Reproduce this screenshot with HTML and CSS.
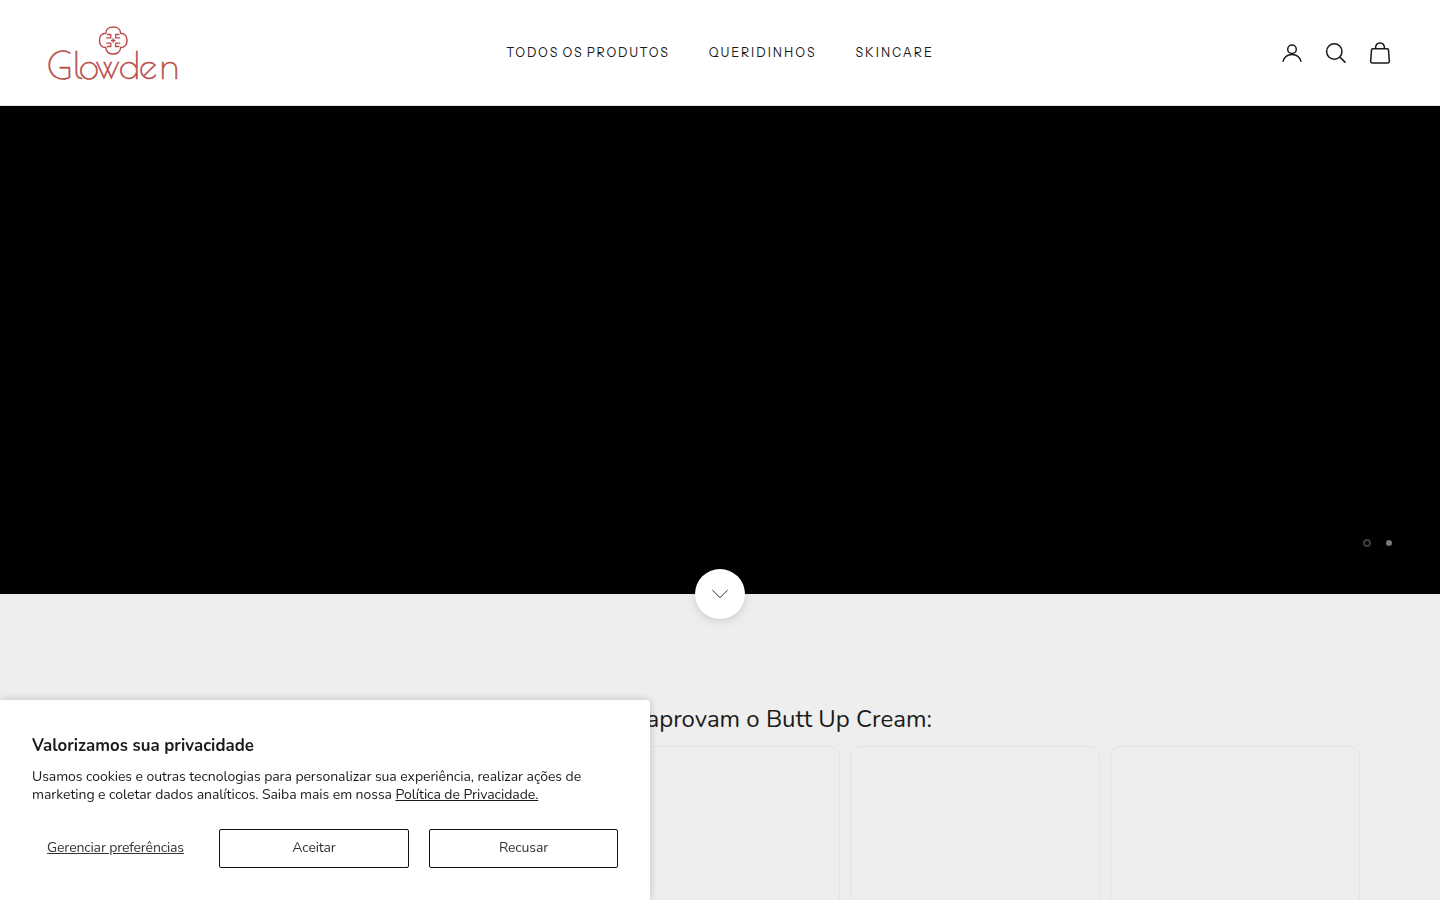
FILE: index.html
```html
<!DOCTYPE html>
<html lang="pt-BR">
<head>
<meta charset="utf-8">
<title>Glowden</title>
<link rel="stylesheet" href="styles.css">
</head>
<body>
<header class="header">
  <a class="logo" aria-label="Glowden">
    <svg width="130" height="56" viewBox="0 0 130 56">
      <g fill="none" stroke="#b84a48" stroke-linejoin="round">
        <path stroke-width="1.500" d="M57.800 8.200C57.800 4.200 61 2 65.200 2S72.600 4.200 72.600 8.200C76.600 8.200 79 11.300 79 15.400S76.600 22.600 72.600 22.600C72.600 26.600 69.400 29 65.200 29S57.800 26.600 57.800 22.600C53.800 22.600 51.500 19.500 51.500 15.400S53.800 8.200 57.800 8.200Z"/>
        <path stroke-width="1.300" d="M59 9.500h3.800v3.300h-4.600M71.400 9.500h-3.800v3.300h4.600M59 21.500h3.800v-3.300h-4.600M71.400 21.500h-3.800v-3.300h4.600M65.200 13.200v4.600M62.900 15.500h4.600"/>
      </g>
      <text class="wordmark" x="-1 25.500 31 48 71 91 112" y="54">Glowden</text>
    </svg>
  </a>
  <nav class="nav">
    <a class="nav-wide">TODOS OS PRODUTOS</a>
    <a>QUERIDINHOS</a>
    <a>SKINCARE</a>
  </nav>
  <div class="actions">
    <svg class="icon" viewBox="0 0 22 22"><circle cx="11" cy="7.300" r="4.300"/><path d="M1.800 19.800c1.300-4.500 4.700-7.300 9.200-7.300s7.900 2.800 9.200 7.300"/></svg>
    <svg class="icon" viewBox="0 0 22 22"><circle cx="9.300" cy="9.500" r="7.700"/><path d="m14.900 15.100 5.600 5.500"/></svg>
    <svg class="icon" viewBox="0 0 22 22"><path d="M3.700 6.800h14.600q1.100 0 1.200 1.100l.8 11.300q.1 1.700-1.600 1.700H3.300q-1.700 0-1.600-1.700l.8-11.300q.1-1.100 1.200-1.100zM6.500 6.800c0-3.200 1.700-5.700 4.500-5.700s4.500 2.500 4.500 5.700"/></svg>
  </div>
</header>
<section class="hero">
  <div class="dots"><span class="dot"></span><span class="dot dot-active"></span></div>
  <button class="scroll-down" aria-label="Rolar"><svg width="18" height="10" viewBox="0 0 18 10"><path d="m1.300 1 7.700 7.600L16.700 1"/></svg></button>
</section>
<section class="reviews">
  <h2 class="reviews-title"><span>aprovam o Butt Up Cream:</span></h2>
  <div class="cards"><div class="card"></div><div class="card"></div><div class="card"></div><div class="card"></div><div class="card"></div></div>
</section>
<aside class="cookie">
  <h3 class="cookie-title">Valorizamos sua privacidade</h3>
  <p class="cookie-text">Usamos cookies e outras tecnologias para personalizar sua experiência, realizar ações de<br>marketing e coletar dados analíticos. Saiba mais em nossa <a class="link">Política de Privacidade.</a></p>
  <div class="cookie-actions">
    <button class="btn-link">Gerenciar preferências</button>
    <button class="btn">Aceitar</button>
    <button class="btn">Recusar</button>
  </div>
</aside>
</body>
</html>
```
FILE: styles.css
```css
* { box-sizing: border-box; }
body {
  margin: 0;
  height: 900px;
  overflow: hidden;
  background: #eee;
  color: #1a1a1a;
  font-family: Nunito, "Open Sans", "Noto Sans", sans-serif;
}
.header {
  display: grid;
  grid-template-columns: 1fr auto 1fr;
  align-items: center;
  height: 106px;
  padding: 0 48px;
  background: #fff;
  border-bottom: 1px solid #e3e3e3;
}
.logo, .logo svg { display: block; }
.logo svg { overflow: visible; }
.wordmark { fill: #b84a48; stroke: #b84a48; stroke-width: .5; font: 400 36px "Poiret One", Lato, sans-serif; }
.nav {
  display: flex;
  gap: 39px;
  font: 400 12.5px/20px "Instrument Sans", Inter, sans-serif;
  letter-spacing: 1.98px;
  white-space: nowrap;
}
.nav-wide { letter-spacing: 1.75px; word-spacing: -.8px; }
.actions { display: flex; justify-content: flex-end; gap: 22px; padding-right: 1px; }
.icon {
  width: 22px;
  height: 22px;
  fill: none;
  stroke: #1a1a1a;
  stroke-width: 1.5;
}
.hero {
  position: relative;
  display: flex;
  align-items: flex-end;
  justify-content: flex-end;
  height: 488px;
  padding: 0 48px 47px;
  background: #000;
}
.dots { display: flex; align-items: center; gap: 15px; }
.dot { width: 8px; height: 8px; border: 2px solid #3c3c3c; border-radius: 50%; }
.dot-active { width: 6px; height: 6px; border: 0; background: #777; }
.scroll-down {
  position: absolute;
  left: 695px;
  bottom: -25px;
  display: grid;
  place-items: center;
  width: 50px;
  height: 50px;
  padding: 0;
  border: 0;
  border-radius: 50%;
  background: #fff;
  box-shadow: 0 2px 10px rgba(0, 0, 0, .15);
}
.scroll-down path { fill: none; stroke: #333; }
.reviews { height: 306px; padding: 107px 80px 0; overflow: hidden; }
.reviews-title {
  margin: 0;
  padding-right: 428px;
  text-align: right;
  font-size: 24px;
  font-weight: 400;
  line-height: 36px;
  white-space: nowrap;
}
.cards { display: flex; justify-content: flex-end; gap: 10px; margin-top: 9px; }
.card {
  flex: 0 0 250px;
  height: 400px;
  border: 1px solid #e4e4e4;
  border-radius: 10px;
}
.cookie {
  position: fixed;
  left: 0;
  bottom: 0;
  width: 650px;
  height: 200px;
  padding: 34px 32px 32px;
  background: #fff;
  border-radius: 0 3px 0 0;
  box-shadow: 0 0 8px rgba(0, 0, 0, .2);
}
.cookie-title { margin: 0 0 10px; font-size: 16.8px; line-height: 24px; font-weight: 700; letter-spacing: .03px; white-space: nowrap; }
.cookie-text { margin: 0; font-size: 14px; line-height: 18px; letter-spacing: -.06px; white-space: nowrap; }
.link { text-decoration: underline; }
.cookie-actions { display: grid; grid-template-columns: 167px 190px 189px; column-gap: 20px; margin-top: 25px; }
.btn, .btn-link {
  height: 39px;
  padding: 0 0 2px;
  color: #333;
  background: #fff;
  font-family: inherit;
  font-size: 14px;
  letter-spacing: -.16px;
}
.btn { border: 1px solid #111; border-radius: 2px; }
.btn-link { border: 0; text-decoration: underline; white-space: nowrap; }
```
